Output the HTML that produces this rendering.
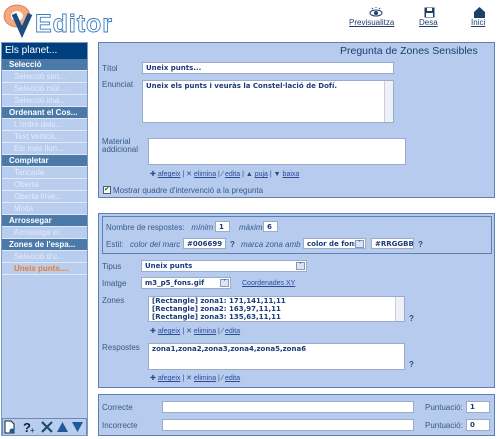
<!DOCTYPE html>
<html><head><meta charset="utf-8"><style>
*{margin:0;padding:0;box-sizing:border-box}
body{width:500px;height:439px;background:#fff;position:relative;overflow:hidden;font-family:"Liberation Sans",sans-serif;font-size:8px;color:#2a4c7a}
.a{position:absolute;white-space:nowrap}
.sb{left:1px;top:42px;width:87px;height:394px;background:#b9cdef;border:1px solid #7d99c4}
.sb div{position:absolute;left:0;width:85px;height:12px;line-height:11px;border-bottom:1px solid #dfe8f6;font-size:8px}
.h{background:#4b79a8;color:#fff;font-weight:bold;padding-left:7px}
.i{color:#e4ecf8;padding-left:12px}
.p{background:#b6cbee;border:1px solid #5d7fb2}
.in{background:#fff;border:1px solid #9aaccb;color:#1a3a7a;font-weight:bold;font-size:7px;padding-left:3px;line-height:10px;font-family:"DejaVu Sans",sans-serif;overflow:hidden}
.l{font-size:8px;color:#3a5a88}
.lk{font-size:7px;color:#2a4c7a}
.lk u{color:#2a4c9a}
.it{font-style:italic}
.q{font-weight:bold;color:#2a4c7a}
.dd{position:absolute;right:1px;top:1px;width:9px;height:8px;background:#dde4ef;border:1px solid #8899bb;font-size:6px;line-height:6px;text-align:center}
</style></head><body>
<svg class="a" style="left:0;top:0" width="120" height="40">
<ellipse cx="17" cy="16" rx="13" ry="11" fill="#f4a880" stroke="#d88860"/>
<ellipse cx="17" cy="16" rx="6" ry="5" fill="#fff"/>
<path d="M14 14 L22 32 L30 14" stroke="#1e4d82" stroke-width="5" fill="none"/>
<text x="35" y="32" font-family="Liberation Sans" font-size="25" font-weight="bold" fill="#fff" stroke="#3a7cc0" stroke-width="0.9" textLength="77">Editor</text>
</svg>
<svg class="a" style="left:369px;top:7px" width="14" height="10"><ellipse cx="7" cy="6" rx="6" ry="3" fill="none" stroke="#1d3f6a"/><circle cx="7" cy="6" r="2" fill="#1d3f6a"/><path d="M3 2L4 1M7 1V0M11 2L10 1" stroke="#1d3f6a"/></svg>
<div class="a" style="left:349px;top:18px;font-size:8px;color:#1d3f6a;text-decoration:underline">Previsualitza</div>
<svg class="a" style="left:424px;top:7px" width="11" height="11"><rect x="0.5" y="0.5" width="10" height="10" fill="#1d3f6a"/><rect x="3" y="1" width="5" height="3" fill="#fff"/><rect x="2" y="6" width="7" height="4" fill="#fff"/></svg>
<div class="a" style="left:419px;top:18px;font-size:8px;color:#1d3f6a;text-decoration:underline">Desa</div>
<svg class="a" style="left:474px;top:7px" width="11" height="11"><path d="M0 5L5.5 0L11 5V11H0Z" fill="#1d3f6a"/></svg>
<div class="a" style="left:471px;top:18px;font-size:8px;color:#1d3f6a;text-decoration:underline">Inici</div>
<div class="a sb">
<div style="top:0;height:16px;background:#003f7e;color:#fff;font-size:10px;line-height:15px;padding-left:3px;border:none">Els planet...</div>
<div class="h" style="top:16px">Selecció</div>
<div class="i" style="top:28px">Selecció sim...</div>
<div class="i" style="top:40px">Selecció múl...</div>
<div class="i" style="top:52px">Selecció ima...</div>
<div class="h" style="top:64px">Ordenant el Cos...</div>
<div class="i" style="top:76px">L'ordre dels...</div>
<div class="i" style="top:88px">Text vertica...</div>
<div class="i" style="top:100px">Els més llun...</div>
<div class="h" style="top:112px">Completar</div>
<div class="i" style="top:124px">Tancada</div>
<div class="i" style="top:136px">Oberta</div>
<div class="i" style="top:148px">Oberta línie...</div>
<div class="i" style="top:160px">Mixta</div>
<div class="h" style="top:172px">Arrossegar</div>
<div class="i" style="top:184px">Arrossega el...</div>
<div class="h" style="top:196px">Zones de l'espa...</div>
<div class="i" style="top:208px">Selecció d'u...</div>
<div class="i" style="top:220px;color:#f07a20;font-weight:bold">Uneix punts....</div>
<div style="top:375px;height:17px;border:1px solid #6b8ab8;border-bottom:none;background:#b9cdef"></div>
</div>
<svg class="a" style="left:4px;top:420px" width="82" height="14">
<path d="M1 1H7L10 4V13H1Z" fill="#fff" stroke="#123"/><circle cx="8" cy="11" r="2.5" fill="#1e5a9a"/>
<text x="19" y="12" font-family="Liberation Sans" font-weight="bold" font-size="13" fill="#123">?</text><text x="26" y="13" font-size="8" fill="#1e5a9a" font-weight="bold">+</text>
<path d="M38 2L48 12M48 2L38 12" stroke="#1e4d6a" stroke-width="2.2"/>
<path d="M53 12L58.5 2L64 12Z" fill="#1e5a9a"/><path d="M68 2H79L73.5 12Z" fill="#1e5a9a"/>
</svg>
<div class="a p" style="left:98px;top:42px;width:397px;height:156px"></div>
<div class="a" style="left:340px;top:45px;font-size:10.5px;color:#1d3f6a">Pregunta de Zones Sensibles</div>
<div class="a l" style="left:102px;top:64px">Títol</div>
<div class="a in" style="left:142px;top:62px;width:252px;height:12px">Uneix punts...</div>
<div class="a l" style="left:102px;top:80px">Enunciat</div>
<div class="a in" style="left:142px;top:80px;width:252px;height:43px">Uneix els punts i veuràs la Constel·lació de Dofí.<div class="a" style="right:0;top:0;width:9px;height:41px;background:#eef2f8;border-left:1px solid #ccd"></div></div>
<div class="a l" style="left:102px;top:138px;line-height:8px">Material<br>addicional</div>
<div class="a in" style="left:148px;top:138px;width:258px;height:27px"></div>
<div class="a lk" style="left:150px;top:170px">✚ <u>afegeix</u> | ✕ <u>elimina</u> | ⁄ <u>edita</u> | ▲ <u>puja</u> | ▼ <u>baixa</u></div>
<div class="a" style="left:103px;top:186px;width:8px;height:8px;background:#fff;border:1px solid #557;font-size:7px;line-height:6px;color:#080">✔</div>
<div class="a l" style="left:113px;top:186px">Mostrar quadre d'intervenció a la pregunta</div>
<div class="a p" style="left:98px;top:213px;width:397px;height:175px"></div>
<div class="a" style="left:102px;top:216px;width:390px;height:38px;border:1px solid #5d7fb2"></div>
<div class="a l" style="left:106px;top:223px">Nombre de respostes: &nbsp; <span class="it">mínim</span></div>
<div class="a in" style="left:215px;top:221px;width:15px;height:11px">1</div>
<div class="a l it" style="left:239px;top:223px">màxim</div>
<div class="a in" style="left:263px;top:221px;width:15px;height:11px">6</div>
<div class="a l" style="left:106px;top:240px">Estil: &nbsp; <span class="it">color del marc</span></div>
<div class="a in" style="left:183px;top:238px;width:43px;height:11px">#006699</div>
<div class="a q" style="left:230px;top:240px">?</div>
<div class="a l it" style="left:241px;top:240px">marca zona amb</div>
<div class="a in" style="left:303px;top:238px;width:63px;height:11px">color de fons<span class="dd">˅</span></div>
<div class="a in" style="left:371px;top:238px;width:43px;height:11px">#RRGGBB</div>
<div class="a q" style="left:418px;top:240px">?</div>
<div class="a l" style="left:102px;top:262px">Tipus</div>
<div class="a in" style="left:141px;top:260px;width:166px;height:12px">Uneix punts<span class="dd">˅</span></div>
<div class="a l" style="left:102px;top:279px">Imatge</div>
<div class="a in" style="left:141px;top:277px;width:90px;height:12px">m3_p5_fons.gif<span class="dd">˅</span></div>
<div class="a lk" style="left:242px;top:280px"><u>Coordenades XY</u></div>
<div class="a l" style="left:102px;top:296px">Zones</div>
<div class="a in" style="left:148px;top:296px;width:257px;height:26px;line-height:8px;font-size:7px">[Rectangle] zona1: 171,141,11,11<br>[Rectangle] zona2: 163,97,11,11<br>[Rectangle] zona3: 135,63,11,11<div class="a" style="right:0;top:0;width:9px;height:24px;background:#eef2f8;border-left:1px solid #ccd"></div></div>
<div class="a q" style="left:409px;top:314px">?</div>
<div class="a lk" style="left:150px;top:327px">✚ <u>afegeix</u> | ✕ <u>elimina</u> | ⁄ <u>edita</u></div>
<div class="a l" style="left:102px;top:343px">Respostes</div>
<div class="a in" style="left:148px;top:343px;width:257px;height:27px">zona1,zona2,zona3,zona4,zona5,zona6</div>
<div class="a q" style="left:409px;top:360px">?</div>
<div class="a lk" style="left:150px;top:374px">✚ <u>afegeix</u> | ✕ <u>elimina</u> | ⁄ <u>edita</u></div>
<div class="a p" style="left:98px;top:394px;width:397px;height:42px"></div>
<div class="a l" style="left:102px;top:403px">Correcte</div>
<div class="a in" style="left:162px;top:401px;width:252px;height:12px"></div>
<div class="a l" style="left:425px;top:403px">Puntuació:</div>
<div class="a in" style="left:466px;top:401px;width:24px;height:12px">1</div>
<div class="a l" style="left:102px;top:421px">Incorrecte</div>
<div class="a in" style="left:162px;top:419px;width:252px;height:12px"></div>
<div class="a l" style="left:425px;top:421px">Puntuació:</div>
<div class="a in" style="left:466px;top:419px;width:24px;height:12px">0</div>
</body></html>
